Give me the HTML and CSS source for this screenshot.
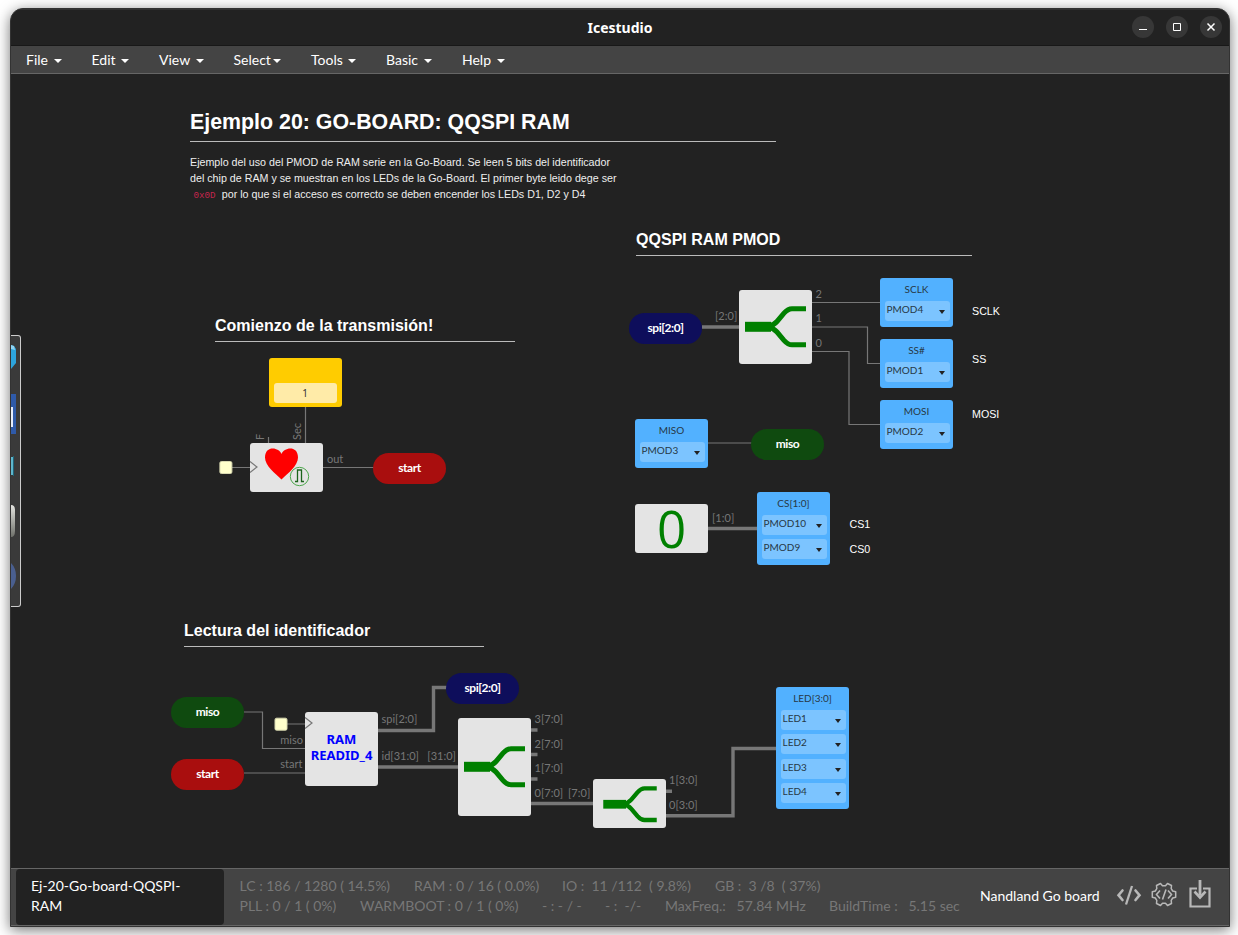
FILE: index.html
```html
<!DOCTYPE html>
<html lang="es">
<head>
<meta charset="utf-8">
<title>Icestudio</title>
<link rel="stylesheet" href="styles.css">
</head>
<body>
<div class="window">
  <header class="titlebar">
    <span class="app-title">Icestudio</span>
    <div class="win-buttons">
      <span class="win-btn"><svg width="22" height="22"><path d="M7 13.500h8" stroke="#fff" fill="none"/></svg></span>
      <span class="win-btn"><svg width="22" height="22"><path d="M7.500 7.500h7v7h-7z" stroke="#fff" fill="none"/></svg></span>
      <span class="win-btn"><svg width="22" height="22"><path d="M7.500 7.500l7 7M14.500 7.500l-7 7" stroke="#fff" stroke-width="1.500" fill="none"/></svg></span>
    </div>
  </header>
  <nav class="menubar">
    <span class="menu">File<i class="caret"></i></span>
    <span class="menu">Edit<i class="caret"></i></span>
    <span class="menu">View<i class="caret"></i></span>
    <span class="menu">Select<i class="caret"></i></span>
    <span class="menu">Tools<i class="caret"></i></span>
    <span class="menu">Basic<i class="caret"></i></span>
    <span class="menu">Help<i class="caret"></i></span>
  </nav>

  <main class="canvas">
    <div class="dock">
      <svg width="10" height="272" viewBox="0 0 10 272">
        <defs>
          <linearGradient id="metal" x1="0" y1="0" x2="0" y2="1"><stop offset="0" stop-color="#e4e4e0"/><stop offset="1" stop-color="#6e706a"/></linearGradient>
        </defs>
        <path d="M0 9l3 1 2 3v14l-5 6z" fill="#2da4dc"/><path d="M0 9l3 1 1 4-4-1z" fill="#8fd3f2"/>
        <rect y="58" width="5" height="40" fill="#2f5aa9"/><rect y="71" width="2" height="20" fill="#e8eefb"/>
        <path d="M0 121h2.500v18H0z" fill="#5fb6cc"/><path d="M2.500 120v20" stroke="#1f6478"/>
        <path d="M0 169q4 0 4 5v21q0 6-4 6z" fill="url(#metal)"/>
        <path d="M0 227q5 5 5 13t-5 13z" fill="#4a5f8f"/>
      </svg>
    </div>

    <div class="world">
      <svg class="wires" width="1238" height="935">
        <g class="thin">
          <path d="M232 467.500H250M305.500 406V443M268.500 437V443M323 467.500H374"/>
          <path d="M812 302.500H880M812 327H867.500V363.500H880M812 351.500H849V424.500H880M708 443H752"/>
          <path d="M244 712H262.500V748.500H305M287 724H305M244 773H305"/>
        </g>
        <g class="thick">
          <path d="M702 327H739M708 528.500H757"/>
          <path d="M378 730.500H433.500V687.500H447M378 767H458"/>
          <path d="M531 730H537.500M531 754.500H537.500M531 779H537.500M531 803.500H593M666 791.300H672M666 815.700H733V748.500H776"/>
        </g>
        <g class="port">
          <text x="327" y="463">out</text>
          <text transform="translate(264 440) rotate(-90)">F</text>
          <text transform="translate(301 440) rotate(-90)">Sec</text>
          <text x="715" y="320">[2:0]</text>
          <text x="815.500" y="298">2</text>
          <text x="815.500" y="322">1</text>
          <text x="815.500" y="347">0</text>
          <text x="712" y="522">[1:0]</text>
          <text x="280.300" y="744">miso</text>
          <text x="280.300" y="768">start</text>
          <text x="381.500" y="723">spi[2:0]</text>
          <text x="381.500" y="760">id[31:0]</text>
          <text x="427.300" y="760">[31:0]</text>
          <text x="534.500" y="723">3[7:0]</text>
          <text x="534.500" y="748">2[7:0]</text>
          <text x="534.500" y="772">1[7:0]</text>
          <text x="534.500" y="797">0[7:0]</text>
          <text x="568" y="797">[7:0]</text>
          <text x="669" y="784">1[3:0]</text>
          <text x="669" y="809">0[3:0]</text>
        </g>
        <g class="clock">
          <rect x="219.900" y="461.500" width="12" height="12" rx="1.500"/>
          <rect x="275" y="718.200" width="12" height="12" rx="1.500"/>
        </g>
      </svg>

      <section class="note note-main">
        <h1>Ejemplo 20: GO-BOARD: QQSPI RAM</h1>
        <p>Ejemplo del uso del PMOD de RAM serie en la Go-Board. Se leen 5 bits del identificador<br>del chip de RAM y se muestran en los LEDs de la Go-Board. El primer byte leido dege ser<br><code>0x0D</code> por lo que si el acceso es correcto se deben encender los LEDs D1, D2 y D4</p>
      </section>
      <section class="note note-start"><h2>Comienzo de la transmisión!</h2></section>
      <section class="note note-pmod"><h2>QQSPI RAM PMOD</h2></section>
      <section class="note note-read"><h2>Lectura del identificador</h2></section>

      <div class="constant"><span>1</span></div>
      <div class="block heart">
        <svg width="73" height="49">
          <path d="M31.500 36.500C25 30 15 23 15 14.500C15 2 29 4 31.500 11C34 4 48 2 48 14.500C48 23 38 30 31.500 36.500z" fill="#f00"/>
          <circle cx="49.500" cy="33.500" r="9.200" fill="none" stroke="#4ea84e"/>
          <path d="M45 38.500h2.500v-11.500h4v11.500h2.500" fill="none" stroke="#1b641b" stroke-width="1.300"/>
          <path class="chevron" d="M0 18.500l7 5.500-7 5.500"/>
        </svg>
      </div>
      <div class="label start start-a">start</div>

      <div class="label spi spi-a">spi[2:0]</div>
      <div class="block split-a">
        <svg width="73" height="73" viewBox="0 0 73 73"><g id="fork"><path d="M6 36.800h26" stroke="#008000" stroke-width="10"/><path d="M29 36.500q5.500-1 9-5l7-8.300q4-4.500 8-4.500h14M29 37q5.500 1 9 5l7 8.300q4 4.500 8 4.500h14" fill="none" stroke="#008000" stroke-width="5"/></g></svg>
      </div>
      <div class="io sclk"><b>SCLK</b><span>PMOD4</span></div>
      <div class="io ss"><b>SS#</b><span>PMOD1</span></div>
      <div class="io mosi"><b>MOSI</b><span>PMOD2</span></div>
      <div class="tag tag-sclk">SCLK</div>
      <div class="tag tag-ss">SS</div>
      <div class="tag tag-mosi">MOSI</div>

      <div class="io miso-in"><b>MISO</b><span>PMOD3</span></div>
      <div class="label miso miso-a">miso</div>

      <div class="block zero">0</div>
      <div class="io cs"><b>CS[1:0]</b><span>PMOD10</span><span>PMOD9</span></div>
      <div class="tag tag-cs1">CS1</div>
      <div class="tag tag-cs0">CS0</div>

      <div class="label miso miso-b">miso</div>
      <div class="label start start-b">start</div>
      <div class="block readid">RAM<br>READID_4
        <svg class="clk-mark" width="9" height="14"><path class="chevron" d="M0 1.500l7 5.500-7 5.500"/></svg>
      </div>
      <div class="label spi spi-b">spi[2:0]</div>
      <div class="block split-b"><svg width="73" height="73" viewBox="0 0 73 73"><use href="#fork"/></svg></div>
      <div class="block split-c"><svg width="64" height="64" viewBox="0 0 73 73"><use href="#fork"/></svg></div>
      <div class="io led"><b>LED[3:0]</b><span>LED1</span><span>LED2</span><span>LED3</span><span>LED4</span></div>
    </div>
  </main>

  <footer class="statusbar">
    <div class="project">Ej-20-Go-board-QQSPI-RAM</div>
    <div class="stats">
      <div class="row row-a"><span>LC : 186 / 1280 ( 14.5%)</span><span>RAM : 0 / 16 ( 0.0%)</span><span>IO :&nbsp; 11 /112&nbsp; ( 9.8%)</span><span>GB :&nbsp; 3 /8&nbsp; ( 37%)</span></div>
      <div class="row row-b"><span>PLL : 0 / 1 ( 0%)</span><span>WARMBOOT : 0 / 1 ( 0%)</span><span>- : - / -</span><span>- :&nbsp; -/-</span><span>MaxFreq.:&nbsp;&nbsp; 57.84 MHz</span><span>BuildTime :&nbsp;&nbsp; 5.15 sec</span></div>
    </div>
    <div class="board">Nandland Go board</div>
    <div class="tools">
      <svg width="26" height="20" viewBox="0 0 26 20" fill="none" stroke="#b8b8b8" stroke-width="2.600"><path d="M6.500 5.500L2.500 10.200L6.500 15M19.500 5.500l4 4.700L19.500 15" stroke-linecap="round"/><path d="M16 1L10 19.500" stroke-width="2.300"/></svg>
      <svg width="26" height="26" viewBox="0 0 26 26" fill="none" stroke="#b8b8b8" stroke-width="1.500"><path d="M9.500 1.500l2 2.300h3l2-2.300 4 2-.3 3.200 1.500 2.300 3 .8v5.400l-3 .8-1.500 2.300.3 3.200-4 2-2-2.300h-3l-2 2.300-4-2 .3-3.200-1.500-2.300-3-.8V9.800l3-.8 1.500-2.300-.3-3.200z" stroke-linejoin="round"/><path d="M9 8.500L5.500 12.500L9 16.500M17 8.500l3.500 4L17 16.500M15 7.500L11.500 17.500" stroke-width="1.600"/></svg>
      <svg width="22" height="29" viewBox="0 0 22 29" fill="none" stroke="#b8b8b8"><path d="M8 8.500H1.500v18h19V8.500H14" stroke-width="2.200"/><path d="M11 0v15" stroke-width="2.800"/><path d="M5.500 11.500l5.500 6 5.500-6" stroke-width="2.600"/></svg>
    </div>
  </footer>
</div>
</body>
</html>
```

FILE: styles.css
```css
* { box-sizing: border-box; }
body { margin: 0; width: 1238px; height: 935px; overflow: hidden; background: #fff; font-family: Lato, sans-serif; padding: 8px 8px 8px 10px; }
.window { width: 1220px; height: 919px; display: flex; flex-direction: column; background: #222; border: 1px solid #333; border-radius: 13px 13px 0 0; overflow: hidden; box-shadow: 0 3px 14px rgba(0,0,0,.55); }

.titlebar { height: 37px; flex: none; display: flex; align-items: center; justify-content: center; border-top: 1px solid #333; border-bottom: 1px solid #181818; position: relative; }
.app-title { font: bold 14px "Noto Sans", sans-serif; color: #fff; }
.win-buttons { position: absolute; right: 7px; top: 6px; display: flex; gap: 12px; }
.win-btn { width: 22px; height: 22px; border-radius: 50%; background: #373737; }
.win-btn svg { display: block; }

.menubar { height: 28px; flex: none; display: grid; grid-template-columns: 65.500px 67.500px 74.500px 77.500px 75px 76px 73px; background: #444; border-bottom: 1px solid #666; padding-left: 15px; color: #fff; font-size: 14px; line-height: 27px; }
.menu { display: flex; align-items: center; justify-content: space-between; padding-right: 30px; }
.caret { border: 4px solid transparent; border-top-color: #fff; border-bottom: 0; margin-top: 2px; }

.canvas { height: 794px; flex: none; position: relative; overflow: hidden; background: #222; }
.world { position: absolute; left: -11px; top: -74px; width: 1238px; height: 935px; }
.wires { position: absolute; left: 0; top: 0; }
.thin path { fill: none; stroke: #777; stroke-width: 1.2; }
.thick path { fill: none; stroke: #777; stroke-width: 3.4; }
.port text { font: 11px Lato, sans-serif; fill: #777; }
.clock rect { fill: #ffffcc; stroke: #d8d8b0; }
.chevron { fill: none; stroke: #777; stroke-width: 1.2; }
.dock { position: absolute; left: 0; top: 261px; width: 10px; height: 272px; background: #3a3a3a; border: 1px solid #ccc; border-left: 0; border-radius: 0 3px 3px 0; overflow: hidden; }
.dock svg { display: block; }

.note { position: absolute; color: #fff; font-family: "Liberation Sans", Arial, sans-serif; }
.note h1, .note h2 { margin: 0; border-bottom: 1px solid #bbb; white-space: nowrap; font-weight: bold; }
.note h1 { font-size: 21.370px; line-height: 24px; padding-bottom: 7px; }
.note h2 { font-size: 16.050px; line-height: 18px; padding-bottom: 7px; }
.note p { margin: 12px 0 0; font-size: 10.700px; line-height: 16.200px; white-space: nowrap; color: #eee; }
.note code { font: 9.200px "Liberation Mono", monospace; color: #c7254e; padding: 0 3.400px; }
.note-main { left: 190px; top: 110px; width: 586px; }
.note-start { left: 215px; top: 316px; width: 300px; }
.note-pmod { left: 636px; top: 230px; width: 336px; }
.note-read { left: 184px; top: 621px; width: 300px; }

.block { position: absolute; width: 73px; background: #e4e4e4; border-radius: 3px; }
.block svg { display: block; }
.heart { left: 250px; top: 443px; height: 49px; }
.split-a { left: 739px; top: 290px; height: 73.500px; }
.split-b { left: 458px; top: 718px; height: 98px; padding-top: 12px; }
.split-c { left: 593px; top: 779px; height: 49px; display: flex; align-items: center; justify-content: center; }
.zero { left: 635px; top: 504px; height: 49px; text-align: center; color: #008000; font: 51px/48px "Open Sans", sans-serif; }
.readid { left: 305px; top: 712px; height: 73.500px; padding-top: 19px; text-align: center; color: #00f; font: bold 13px/16px "Noto Sans", sans-serif; }
.clk-mark { position: absolute; left: 0; top: 4px; }

.constant { position: absolute; left: 269px; top: 358px; width: 73px; height: 49px; padding: 24.500px 5px 0; background: #fc0; border-radius: 3px; }
.constant span { display: block; height: 20px; border-radius: 3px; background: #ffeba8; color: #333; font: 10px/20px "Noto Sans", sans-serif; text-align: center; padding-right: 1px; }

.label { position: absolute; width: 73px; height: 30.500px; border-radius: 16px; color: #fff; font-size: 12px; line-height: 30px; font-weight: bold; text-align: center; letter-spacing: -.45px; }
.start { background: #a90e0e; }
.miso { background: #0f4a0f; }
.spi { background: #0e0e5b; }
.start-a { left: 373px; top: 453px; }
.spi-a { left: 629px; top: 313px; }
.miso-a { left: 751px; top: 429px; }
.miso-b { left: 171px; top: 697px; }
.start-b { left: 171px; top: 759px; }
.spi-b { left: 446px; top: 673px; }

.io { position: absolute; width: 73px; padding: 5px 3px 6px 5px; display: flex; flex-direction: column; gap: 4.400px; background: #52b1ff; border-radius: 3px; color: #273845; font-size: 10px; }
.io b { font-weight: normal; height: 13.500px; line-height: 13px; text-align: center; padding-right: 2px; }
.io span { position: relative; height: 20px; line-height: 17.300px; border-radius: 3px; background: #7cc4ff; padding-left: 1.500px; }
.io span::after { content: ""; position: absolute; right: 5px; top: 9px; border: 3px solid transparent; border-top: 4px solid #222; border-bottom: 0; }
.sclk { left: 880px; top: 278px; }
.ss { left: 880px; top: 339px; }
.mosi { left: 880px; top: 400px; }
.miso-in { left: 635px; top: 419px; }
.cs { left: 757px; top: 492px; }
.led { left: 776px; top: 687px; }

.tag { position: absolute; color: #fff; font: 10.700px/14px "Liberation Sans", Arial, sans-serif; }
.tag-sclk { left: 972px; top: 304px; }
.tag-ss { left: 972px; top: 352px; }
.tag-mosi { left: 972px; top: 407px; }
.tag-cs1 { left: 849.500px; top: 517px; }
.tag-cs0 { left: 849.500px; top: 542px; }

.statusbar { height: 58px; flex: none; display: flex; background: #444; border-top: 1px solid #666; border-bottom: 1px solid #666; font-size: 14px; line-height: 20px; color: #fff; padding-left: 5px; }
.project { width: 208px; height: 56px; padding: 7px 25px 0 15px; background: #222; border-radius: 4px; }
.stats { width: 740px; padding: 7px 0 0 15.500px; color: #777; white-space: nowrap; }
.row { display: grid; }
.row-a { grid-template-columns: 174.500px 148px 153px 1fr; }
.row-b { grid-template-columns: 120.500px 182px 63px 60px 164px 1fr; }
.board { width: 152px; padding: 17px 0 0 16px; white-space: nowrap; }
.tools { display: flex; align-items: center; gap: 9px; height: 51px; }
.tools svg:last-child { margin-left: 3px; }
```
